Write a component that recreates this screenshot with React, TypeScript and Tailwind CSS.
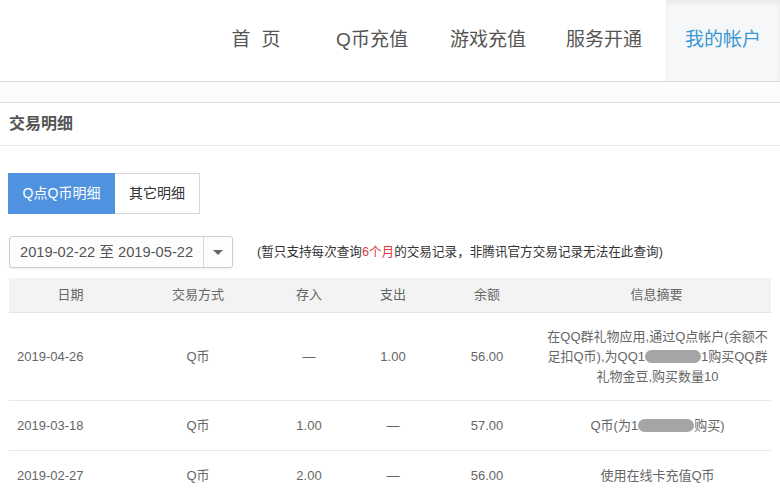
const navItems = [
  { label: 'Q币充值' },
  { label: '游戏充值' },
  { label: '服务开通' },
]

type Row = {
  date: string
  method: string
  income: string
  expense: string
  balance: string
  desc: React.ReactNode
}

function Blur({ w }: { w: number }) {
  return (
    <span
      className="inline-block h-[13px] rounded-full bg-[#8f8f8f] align-[-2px] opacity-80"
      style={{ width: w }}
    />
  )
}

const rows: Row[] = [
  {
    date: '2019-04-26',
    method: 'Q币',
    income: '—',
    expense: '1.00',
    balance: '56.00',
    desc: (
      <>
        在QQ群礼物应用,通过Q点帐户(余额不
        <br />
        足扣Q币),为QQ1<Blur w={56} />1购买QQ群
        <br />
        礼物金豆,购买数量10
      </>
    ),
  },
  {
    date: '2019-03-18',
    method: 'Q币',
    income: '1.00',
    expense: '—',
    balance: '57.00',
    desc: (
      <>
        Q币(为1<Blur w={56} />购买)
      </>
    ),
  },
  {
    date: '2019-02-27',
    method: 'Q币',
    income: '2.00',
    expense: '—',
    balance: '56.00',
    desc: '使用在线卡充值Q币',
  },
]

export default function App() {
  return (
    <div className="w-[780px] h-[494px] overflow-hidden bg-white font-['Liberation_Sans','Noto_Sans_CJK_SC',sans-serif] text-[#555]">
      {/* Top nav */}
      <div className="h-[82px] flex justify-end border-b border-[#dcdcdc] shadow-[0_1px_2px_rgba(0,0,0,0.04)]">
        <div className="w-[116px] flex items-center justify-center text-[19px] text-[#555]">
          首<span className="ml-[11px]">页</span>
        </div>
        {navItems.map((item) => (
          <div key={item.label} className="w-[116px] flex items-center justify-center text-[19px] text-[#555]">
            {item.label}
          </div>
        ))}
        <div className="w-[114px] ml-[4px] flex items-center justify-center text-[19px] text-[#3b97d3] bg-[#f6f7f9] shadow-[inset_0_3px_4px_rgba(0,0,0,0.06)]">
          我的帐户
        </div>
      </div>

      <div className="h-[21px] bg-[#fcfcfc] border-b border-[#e0e0e0]" />

      {/* Title */}
      <div className="h-[43px] flex items-center px-[9px] border-b border-[#e6e6e6]">
        <span className="text-[16px] font-bold text-[#555]">交易明细</span>
      </div>

      {/* Tabs */}
      <div className="flex pl-[8px] pt-[27px]">
        <div className="h-[41px] w-[107px] flex items-center justify-center bg-[#4f93e0] text-white text-[14px]">
          Q点Q币明细
        </div>
        <div className="h-[41px] w-[85px] flex items-center justify-center border border-l-0 border-[#d8d8d8] text-[#333] text-[14px]">
          其它明细
        </div>
      </div>

      {/* Date range */}
      <div className="flex items-center pl-[9px] pt-[22px]">
        <div className="h-[32px] w-[224px] flex border border-[#cfcfcf] rounded-[3px] shadow-[0_1px_2px_rgba(0,0,0,0.08)] bg-[#fdfdfd]">
          <div className="flex-1 flex items-center pl-[10px] text-[14.7px] text-[#555]">2019-02-22 至 2019-05-22</div>
          <div className="w-[29px] border-l border-[#d8d8d8] flex items-center justify-center">
            <span className="w-0 h-0 border-l-[5px] border-r-[5px] border-t-[5px] border-l-transparent border-r-transparent border-t-[#666]" />
          </div>
        </div>
        <div className="ml-[24px] text-[12.6px] text-[#333]">
          (暂只支持每次查询<span className="text-[#e0393e]">6个月</span>的交易记录，非腾讯官方交易记录无法在此查询)
        </div>
      </div>

      {/* Table */}
      <div className="mx-[9px] mt-[10px] w-[762px] text-[13px] text-[#666]">
        <div className="h-[35px] flex items-center bg-[#f3f3f3] border-b border-[#e3e3e3]">
          <div className="w-[123px] text-center">日期</div>
          <div className="w-[132px] text-center">交易方式</div>
          <div className="w-[90px] text-center">存入</div>
          <div className="w-[78px] text-center">支出</div>
          <div className="w-[110px] text-center">余额</div>
          <div className="flex-1 text-center">信息摘要</div>
        </div>
        {rows.map((r, i) => (
          <div
            key={i}
            className={`flex items-center border-b border-[#e8e8e8] ${i === 0 ? 'h-[88px]' : 'h-[50px]'}`}
          >
            <div className="w-[123px] pl-[8px]">{r.date}</div>
            <div className="w-[132px] text-center">{r.method}</div>
            <div className="w-[90px] text-center">{r.income}</div>
            <div className="w-[78px] text-center">{r.expense}</div>
            <div className="w-[110px] text-center">{r.balance}</div>
            <div className="flex-1 text-center leading-[20px] pl-[2px]">{r.desc}</div>
          </div>
        ))}
      </div>
    </div>
  )
}
